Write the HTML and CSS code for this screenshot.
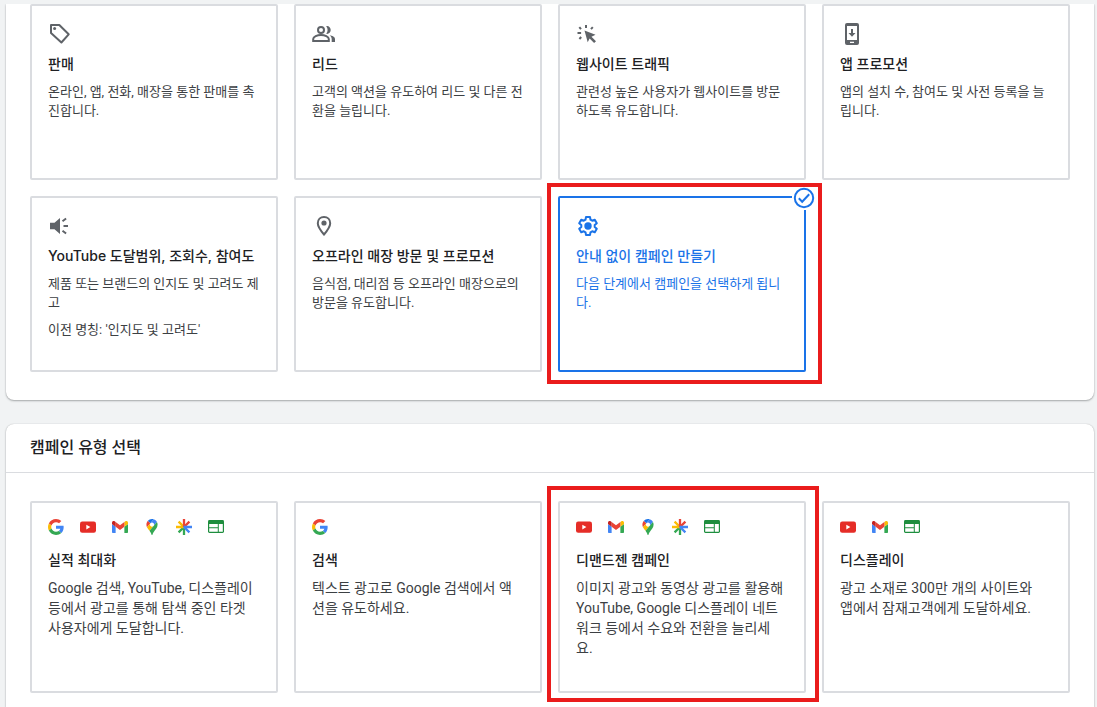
FILE: index.html
```html
<!DOCTYPE html>
<html lang="ko">
<head>
    <meta charset="UTF-8">
    <meta name="viewport" content="width=device-width, initial-scale=1.0">
    <title>새 캠페인</title>
    <link rel="stylesheet" href="styles.css">
</head>
<body>

<!-- Logos reutilizados en las tarjetas -->
<svg class="sprite" aria-hidden="true">
    <symbol id="logo-google" viewBox="0 0 48 48">
        <path fill="#ea4335" d="M24 9.5c3.54 0 6.71 1.22 9.21 3.6l6.85-6.85C35.9 2.38 30.47 0 24 0 14.62 0 6.51 5.38 2.56 13.22l7.98 6.19C12.43 13.72 17.74 9.5 24 9.5z"/>
        <path fill="#4285f4" d="M46.98 24.55c0-1.57-.15-3.09-.38-4.55H24v9.02h12.94c-.58 2.96-2.26 5.48-4.78 7.18l7.73 6c4.51-4.18 7.09-10.36 7.09-17.65z"/>
        <path fill="#fbbc05" d="M10.53 28.59c-.48-1.45-.76-2.99-.76-4.59s.27-3.14.76-4.59l-7.98-6.19C.92 16.46 0 20.12 0 24c0 3.88.92 7.54 2.56 10.78l7.97-6.19z"/>
        <path fill="#34a853" d="M24 48c6.48 0 11.93-2.13 15.89-5.81l-7.73-6c-2.15 1.45-4.92 2.3-8.16 2.3-6.26 0-11.57-4.22-13.47-9.91l-7.98 6.19C6.51 42.62 14.62 48 24 48z"/>
    </symbol>
    <symbol id="logo-youtube" viewBox="0 0 16 16">
        <rect x="0" y="2.5" width="16" height="11.2" rx="2.2" fill="#e52d27"/>
        <path fill="#fff" d="M6.3 5.8v4.6l4.1-2.3z"/>
    </symbol>
    <symbol id="logo-gmail" viewBox="52 42 88 66">
        <path fill="#4285f4" d="M58 108h14V74L52 59v43c0 3.32 2.69 6 6 6"/>
        <path fill="#34a853" d="M120 108h14c3.32 0 6-2.69 6-6V59l-20 15"/>
        <path fill="#fbbc04" d="M120 48v26l20-15v-8c0-7.42-8.47-11.65-14.4-7.2"/>
        <path fill="#ea4335" d="M72 74V48l24 18 24-18v26L96 92"/>
        <path fill="#c5221f" d="M52 51v8l20 15V48l-5.6-4.2c-5.94-4.45-14.4-.22-14.4 7.2"/>
    </symbol>
    <symbol id="logo-maps" viewBox="0 0 92.3 132.3">
        <path fill="#1a73e8" d="M60.2 2.2C55.8.8 51 0 46.1 0 32 0 19.3 6.4 10.8 16.5l21.8 18.3L60.2 2.2z"/>
        <path fill="#ea4335" d="M10.8 16.5C4.1 24.5 0 34.9 0 46.1c0 8.7 1.7 15.7 4.6 22l28-33.3-21.8-18.3z"/>
        <path fill="#4285f4" d="M46.2 28.5c9.8 0 17.7 7.9 17.7 17.7 0 4.3-1.6 8.3-4.2 11.4 0 0 13.9-16.6 27.5-32.7-5.6-10.8-15.3-19-27-22.7L32.6 34.8c3.3-3.8 8.1-6.3 13.6-6.3"/>
        <path fill="#fbbc04" d="M46.2 63.8c-9.8 0-17.7-7.9-17.7-17.7 0-4.3 1.5-8.3 4.1-11.3l-28 33.3c4.8 10.6 12.8 19.2 21 29.9l34.1-40.5c-3.3 3.9-8.1 6.3-13.5 6.3"/>
        <path fill="#34a853" d="M59.1 109.2c15.4-24.1 33.3-35 33.3-63 0-7.7-1.9-14.9-5.2-21.3L25.6 98c2.6 3.4 5.3 7.3 7.9 11.3 9.4 14.5 6.8 23.1 12.8 23.1s3.4-8.7 12.8-23.2"/>
    </symbol>
    <symbol id="logo-discover" viewBox="0 0 16 16">
        <g fill="none" stroke-width="2.3">
            <path stroke="#34a853" d="M8 8v8M8 8l-5.4 5.4"/>
            <path stroke="#fbbc04" d="M8 8H0M8 8L2.600 2.600"/>
            <path stroke="#ea4335" d="M8 8V0M8 8l5.400-5.400"/>
            <path stroke="#4285f4" d="M7.500 8H16M8 8l5.400 5.400"/>
        </g>
    </symbol>
    <symbol id="logo-display" viewBox="0 0 16 16">
        <rect x="0" y="1" width="16" height="13" rx="1.4" fill="#1e8e3e"/>
        <path fill="#fff" d="M1.200 5h8.600v3.300H1.200zM1.200 9.300h8.600v3.500H1.200zM10.800 5h4v7.800h-4z"/>
    </symbol>
</svg>

<main>
    <section class="panel panel-goals">
        <ul class="cards">
            <li class="item">
                <button type="button" class="card">
                    <svg class="icon" viewBox="0 0 24 24"><path fill="none" stroke="currentColor" stroke-width="2" stroke-linejoin="round" d="M3 3h8.3l9.400 9.300-7.300 8.200L3 11z"/><circle cx="6.600" cy="6.400" r="1.500" fill="currentColor"/></svg>
                    <span class="title">판매</span>
                    <span class="text">온라인, 앱, 전화, 매장을 통한 판매를 촉진합니다.</span>
                </button>
            </li>
            <li class="item">
                <button type="button" class="card">
                    <svg class="icon" viewBox="0 0 24 24"><g fill="none" stroke="currentColor" stroke-width="2"><circle cx="9" cy="8" r="3"/><path d="M1.200 19v-2c0-2.300 4-4 7.800-4s7.800 1.700 7.800 4v2z"/></g><path fill="currentColor" d="M14.200 11.800c2.300.6 4.500-1.300 4.500-3.800s-2.200-4.400-4.500-3.800c1.900 2.200 1.900 5.400 0 7.600zM17.600 13.200c1.300 1 2.100 2.200 2.100 3.800v3H23v-3c0-2.200-2.700-3.400-5.400-3.800z"/></svg>
                    <span class="title">리드</span>
                    <span class="text">고객의 액션을 유도하여 리드 및 다른 전환을 늘립니다.</span>
                </button>
            </li>
            <li class="item">
                <button type="button" class="card">
                    <svg class="icon" viewBox="0 0 24 24"><path fill="currentColor" d="M8.500 8.500l11 4.300-4 1.900 4.500 4.500-1.900 1.900-4.500-4.500-1.900 3.600z"/><path fill="none" stroke="currentColor" stroke-width="2" d="M10 3v3M15 7.200l1.800-2M5 7.200l-1.700-2M1.500 11h3.600M5.200 15l-1.800 2"/></svg>
                    <span class="title">웹사이트 트래픽</span>
                    <span class="text">관련성 높은 사용자가 웹사이트를 방문하도록 유도합니다.</span>
                </button>
            </li>
            <li class="item">
                <button type="button" class="card">
                    <svg class="icon" viewBox="0 0 24 24"><path fill="currentColor" fill-rule="evenodd" d="M7 1h10a2 2 0 0 1 2 2v18a2 2 0 0 1-2 2H7a2 2 0 0 1-2-2V3a2 2 0 0 1 2-2zm0 3v14h10V4zm3 15.800v1.200h4v-1.200zM11 7h2v4h2.500L12 14.700 8.500 11H11z"/></svg>
                    <span class="title">앱 프로모션</span>
                    <span class="text">앱의 설치 수, 참여도 및 사전 등록을 늘립니다.</span>
                </button>
            </li>
            <li class="item">
                <button type="button" class="card">
                    <svg class="icon" viewBox="0 0 24 24"><path fill="currentColor" d="M2 8.800h4.500L12 4v16l-5.500-4.800H2z"/><path fill="none" stroke="currentColor" stroke-width="2" d="M15.500 12H20M14.500 7.200l3.600-2.700M14.500 16.800l3.600 2.700"/></svg>
                    <span class="title">YouTube 도달범위, 조회수, 참여도</span>
                    <span class="text">제품 또는 브랜드의 인지도 및 고려도 제고</span>
                    <span class="text">이전 명칭: '인지도 및 고려도'</span>
                </button>
            </li>
            <li class="item">
                <button type="button" class="card">
                    <svg class="icon" viewBox="0 0 24 24"><path fill="none" stroke="currentColor" stroke-width="2" d="M12 3c-3.600 0-6.200 2.700-6.200 6.200 0 4 6.200 11.300 6.200 11.300s6.200-7.300 6.200-11.300C18.200 5.700 15.600 3 12 3z"/><circle cx="12" cy="9" r="2.600" fill="currentColor"/></svg>
                    <span class="title">오프라인 매장 방문 및 프로모션</span>
                    <span class="text">음식점, 대리점 등 오프라인 매장으로의 방문을 유도합니다.</span>
                </button>
            </li>
            <li class="item">
                <button type="button" class="card selected" aria-pressed="true">
                    <svg class="icon" viewBox="0 0 24 24"><path fill="none" stroke="currentColor" stroke-width="2" stroke-linejoin="round" d="M10 3h4l.5 2.700 1.700 1 2.600-1 2 3.500-2.100 1.800v2l2.100 1.800-2 3.500-2.600-1-1.700 1L14 21h-4l-.5-2.700-1.700-1-2.600 1-2-3.500L5.300 13v-2L3.200 9.200l2-3.500 2.600 1 1.700-1z"/><circle cx="12" cy="12" r="3.700" fill="currentColor"/></svg>
                    <span class="title">안내 없이 캠페인 만들기</span>
                    <span class="text">다음 단계에서 캠페인을 선택하게 됩니다.</span>
                </button>
                <svg class="check" viewBox="0 0 24 24" aria-hidden="true"><g fill="none" stroke="currentColor" stroke-width="2"><circle cx="12" cy="12" r="9.200"/><path d="M6.800 12.200l3.400 3.500 7-7.400"/></g></svg>
                <span class="highlight highlight-goal"></span>
            </li>
        </ul>
    </section>

    <section class="panel panel-types">
        <h2 class="panel-title">캠페인 유형 선택</h2>
        <ul class="cards">
            <li class="item">
                <button type="button" class="card card-type">
                    <span class="logos">
                        <svg class="logo"><use href="#logo-google"/></svg>
                        <svg class="logo"><use href="#logo-youtube"/></svg>
                        <svg class="logo"><use href="#logo-gmail"/></svg>
                        <svg class="logo"><use href="#logo-maps"/></svg>
                        <svg class="logo"><use href="#logo-discover"/></svg>
                        <svg class="logo"><use href="#logo-display"/></svg>
                    </span>
                    <span class="title">실적 최대화</span>
                    <span class="text">Google 검색, YouTube, 디스플레이 등에서 광고를 통해 탐색 중인 타겟 사용자에게 도달합니다.</span>
                </button>
            </li>
            <li class="item">
                <button type="button" class="card card-type">
                    <span class="logos">
                        <svg class="logo"><use href="#logo-google"/></svg>
                    </span>
                    <span class="title">검색</span>
                    <span class="text">텍스트 광고로 Google 검색에서 액션을 유도하세요.</span>
                </button>
            </li>
            <li class="item">
                <button type="button" class="card card-type">
                    <span class="logos">
                        <svg class="logo"><use href="#logo-youtube"/></svg>
                        <svg class="logo"><use href="#logo-gmail"/></svg>
                        <svg class="logo"><use href="#logo-maps"/></svg>
                        <svg class="logo"><use href="#logo-discover"/></svg>
                        <svg class="logo"><use href="#logo-display"/></svg>
                    </span>
                    <span class="title">디맨드젠 캠페인</span>
                    <span class="text">이미지 광고와 동영상 광고를 활용해 YouTube, Google 디스플레이 네트워크 등에서 수요와 전환을 늘리세요.</span>
                </button>
                <span class="highlight highlight-type"></span>
            </li>
            <li class="item">
                <button type="button" class="card card-type">
                    <span class="logos">
                        <svg class="logo"><use href="#logo-youtube"/></svg>
                        <svg class="logo"><use href="#logo-gmail"/></svg>
                        <svg class="logo"><use href="#logo-display"/></svg>
                    </span>
                    <span class="title">디스플레이</span>
                    <span class="text">광고 소재로 300만 개의 사이트와 앱에서 잠재고객에게 도달하세요.</span>
                </button>
            </li>
        </ul>
    </section>
</main>

</body>
</html>
```
FILE: styles.css
```css
* {
    box-sizing: border-box;
}

body {
    margin: 0;
    padding: 4px 3px 0 6px;
    background-color: #f1f3f4;
    color: #202124;
    font-family: Roboto, "Noto Sans CJK KR", sans-serif;
}

.sprite {
    position: absolute;
    width: 0;
    height: 0;
}

main {
    display: flex;
    flex-direction: column;
    gap: 24px;
}

.panel {
    background-color: #fff;
    border-radius: 8px;
    box-shadow: 0 1px 2px rgba(60, 64, 67, 0.4), 0 0 1px rgba(60, 64, 67, 0.3);
}

.panel-goals {
    border-radius: 0 0 8px 8px;
    clip-path: inset(0 -4px -4px -4px);
}

.panel-types {
    border-radius: 8px 8px 0 0;
}

.panel-title {
    margin: 0;
    padding: 12px 24px;
    border-bottom: 1px solid #dadce0;
    font-size: 16px;
    font-weight: 500;
    line-height: 24px;
}

.cards {
    display: grid;
    grid-template-columns: repeat(4, 1fr);
    gap: 16px;
    margin: 0;
    padding: 0 24px 28px;
    list-style: none;
}

.panel-types .cards {
    padding-top: 28px;
    padding-bottom: 14px;
}

.item {
    position: relative;
    display: flex;
}

.card {
    display: flex;
    flex-direction: column;
    align-items: flex-start;
    gap: 8px;
    width: 100%;
    min-height: 176px;
    padding: 16px;
    border: 2px solid #dadce0;
    border-radius: 2px;
    background-color: #fff;
    color: #202124;
    font-family: inherit;
    text-align: left;
    cursor: pointer;
}

.icon {
    width: 24px;
    height: 24px;
    color: #5f6368;
}

.title {
    font-family: Inter, "Noto Sans CJK KR", sans-serif;
    font-size: 14px;
    font-weight: 500;
    line-height: 20px;
}

.text {
    color: #3c4043;
    font-size: 13px;
    line-height: 19px;
}

.card.selected {
    border-color: #1a73e8;
}

.card.selected,
.card.selected .icon,
.card.selected .text {
    color: #1a73e8;
}

.check {
    position: absolute;
    top: -10px;
    right: -10px;
    width: 24px;
    height: 24px;
    background-color: #fff;
    color: #1a73e8;
}

.card-type {
    min-height: 192px;
}

.card-type .text {
    padding-right: 4px;
    font-size: 14px;
    line-height: 20px;
}

.logos {
    display: flex;
    gap: 16px;
    margin-bottom: 7px;
}

.logo {
    width: 16px;
    height: 16px;
}

/* Marcos rojos */
.highlight {
    position: absolute;
    border: 4px solid #ea1c1c;
    pointer-events: none;
}

.highlight-goal {
    inset: -13px -16px -12px -11px;
}

.highlight-type {
    inset: -15px -13px -9px -11px;
}
```
